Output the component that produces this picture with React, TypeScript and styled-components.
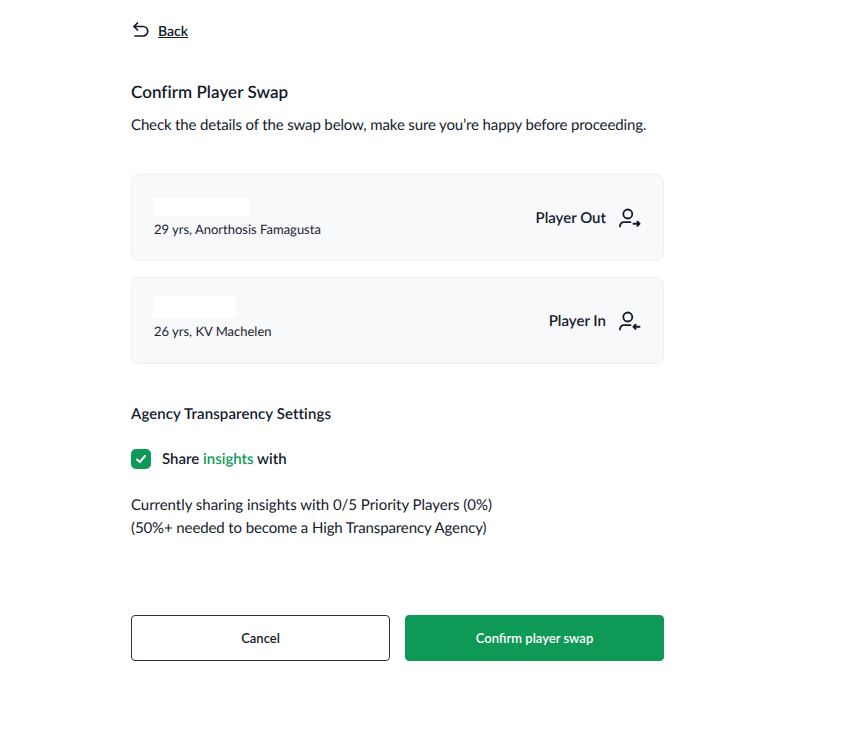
import React, { FunctionComponent } from 'react';
import styled, { createGlobalStyle } from 'styled-components';

const GlobalStyle = createGlobalStyle`
  html, body {
    margin: 0;
    padding: 0;
    background: #fff;
  }
  body {
    font-family: Lato, "Open Sans", sans-serif;
    color: #131a2b;
    text-rendering: geometricPrecision;
  }
`;

const Page = styled.div`
  width: 533px;
  margin-left: 131px;
  padding-top: 20px;
  display: flex;
  flex-direction: column;
`;

const BackLink = styled.a`
  display: flex;
  align-items: center;
  gap: 8px;
  height: 20px;
  margin-left: 1px;
  font-size: 14px;
  font-weight: 600;
  color: #131a2b;
  text-decoration: underline;
`;

const Title = styled.h1`
  margin: 41px 0 0;
  font-size: 17px;
  line-height: 22px;
  font-weight: 600;
  letter-spacing: 0.05px;
`;

const Intro = styled.p`
  margin: 11px 0 0;
  font-size: 15px;
  line-height: 22px;
  letter-spacing: -0.14px;
`;

const Cards = styled.div`
  margin-top: 38px;
  display: flex;
  flex-direction: column;
  gap: 16px;
`;

const Card = styled.div`
  height: 87px;
  box-sizing: border-box;
  padding: 0 21px 0 22px;
  display: flex;
  align-items: center;
  justify-content: space-between;
  background: #f8f9fb;
  border: 1px solid #eef0f3;
  border-radius: 8px;
`;

const PlayerInfo = styled.div`
  align-self: flex-start;
  display: flex;
  flex-direction: column;
`;

const NameMask = styled.div<{ $width: number; $height: number; $top: number }>`
  width: ${(p) => p.$width}px;
  height: ${(p) => p.$height}px;
  margin-top: ${(p) => p.$top}px;
  margin-bottom: 4px;
  margin-left: -1px;
  background: #fff;
`;

const Details = styled.span`
  font-size: 13px;
  line-height: 18px;
  color: #1d2433;
`;

const Direction = styled.div`
  display: flex;
  align-items: center;
  gap: 12px;
  font-size: 15px;
  font-weight: 600;
`;

const SectionTitle = styled.h2`
  margin: 40px 0 0;
  font-size: 15px;
  line-height: 20px;
  font-weight: 600;
  letter-spacing: 0.1px;
`;

const ShareRow = styled.label`
  margin-top: 25px;
  display: flex;
  align-items: center;
  gap: 11px;
  font-size: 15px;
  font-weight: 600;
`;

const CheckBox = styled.span`
  width: 20px;
  height: 20px;
  border-radius: 5px;
  background: #0f9956;
  display: flex;
  align-items: center;
  justify-content: center;
`;

const Green = styled.span`
  color: #0f9956;
`;

const Note = styled.div`
  margin-top: 25px;
  display: flex;
  flex-direction: column;
`;

const NoteLine = styled.span<{ $tracking: number }>`
  font-size: 15px;
  line-height: 23px;
  letter-spacing: ${(p) => p.$tracking}px;
`;

const Actions = styled.div`
  margin-top: 75px;
  display: grid;
  grid-template-columns: 1fr 1fr;
  gap: 15px;
`;

const Button = styled.button<{ $primary?: boolean }>`
  height: 46px;
  border-radius: 4px;
  font-family: inherit;
  font-size: 13px;
  font-weight: 600;
  color: ${(p) => (p.$primary ? '#fff' : '#131a2b')};
  background: ${(p) => (p.$primary ? '#0f9956' : '#fff')};
  border: 1px solid ${(p) => (p.$primary ? '#0f9956' : '#2b3242')};
`;

const BackIcon = () => (
  <svg width="18" height="18" viewBox="0 0 18 18" fill="none" stroke="#131a2b" strokeWidth="1.7" strokeLinecap="round" strokeLinejoin="round">
    <path d="M5.5 2 L2 5.5 L5.5 9" />
    <path d="M2 5.5 H11 a4.5 4.5 0 0 1 0 9.5 H3" />
  </svg>
);

const PlayerIcon: FunctionComponent<{ out?: boolean }> = ({ out }) => (
  <svg width="24" height="24" viewBox="0 0 24 24" fill="none" stroke="#131a2b" strokeWidth="1.8" strokeLinecap="round" strokeLinejoin="round">
    <circle cx="9.8" cy="8" r="4.5" />
    <path d="M2 20.5 v-0.5 a3.8 3.8 0 0 1 3.8 -3.8 H12.5" />
    {out ? (
      <path d="M15.5 17.8 H21.5 M19.4 15.7 L21.5 17.8 L19.4 19.9" strokeWidth="2" />
    ) : (
      <path d="M15.5 17.8 H21.5 M17.6 15.7 L15.5 17.8 L17.6 19.9" strokeWidth="2" />
    )}
  </svg>
);

const CheckIcon = () => (
  <svg width="12" height="12" viewBox="0 0 12 12" fill="none" stroke="#fff" strokeWidth="2" strokeLinecap="round" strokeLinejoin="round">
    <path d="M2 6.5 L4.8 9 L10 3" />
  </svg>
);

const App: FunctionComponent = () => {
  return (
    <>
      <GlobalStyle />
      <Page>
        <BackLink>
          <BackIcon />
          Back
        </BackLink>
        <Title>Confirm Player Swap</Title>
        <Intro>Check the details of the swap below, make sure you’re happy before proceeding.</Intro>
        <Cards>
          <Card>
            <PlayerInfo>
              <NameMask $width={96} $height={18} $top={23} />
              <Details>29 yrs, Anorthosis Famagusta</Details>
            </PlayerInfo>
            <Direction>
              Player Out
              <PlayerIcon out />
            </Direction>
          </Card>
          <Card>
            <PlayerInfo>
              <NameMask $width={83} $height={22} $top={18} />
              <Details>26 yrs, KV Machelen</Details>
            </PlayerInfo>
            <Direction>
              Player In
              <PlayerIcon />
            </Direction>
          </Card>
        </Cards>
        <SectionTitle>Agency Transparency Settings</SectionTitle>
        <ShareRow>
          <CheckBox>
            <CheckIcon />
          </CheckBox>
          <span>
            Share <Green>insights</Green> with
          </span>
        </ShareRow>
        <Note>
          <NoteLine $tracking={-0.035}>Currently sharing insights with 0/5 Priority Players (0%)</NoteLine>
          <NoteLine $tracking={-0.11}>(50%+ needed to become a High Transparency Agency)</NoteLine>
        </Note>
        <Actions>
          <Button>Cancel</Button>
          <Button $primary>Confirm player swap</Button>
        </Actions>
      </Page>
    </>
  );
};

export default App;
